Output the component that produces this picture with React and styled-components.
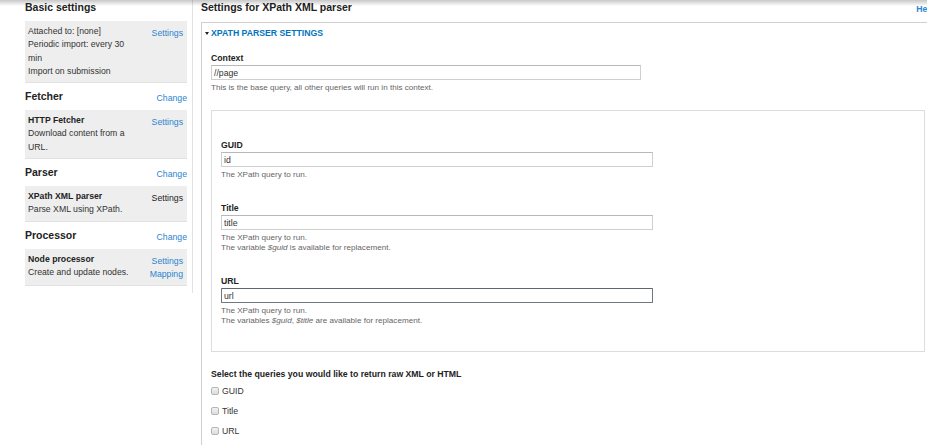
import React from 'react'
import styled, { createGlobalStyle } from 'styled-components'

const GlobalStyle = createGlobalStyle`
  html, body {
    margin: 0;
    padding: 0;
    overflow: hidden;
    background: #fff;
  }
  body {
    font-family: "Liberation Sans", Arial, sans-serif;
    color: #333;
    font-size: 8.7px;
  }
`

const Page = styled.div`
  display: flex;
  align-items: flex-start;
  padding-left: 25px;
  width: 960px;
  &::after {
    content: '';
    position: fixed;
    top: 0;
    left: 0;
    right: 0;
    height: 6px;
    background: linear-gradient(rgba(0, 0, 0, 0.22), rgba(0, 0, 0, 0));
    pointer-events: none;
  }
`

const Sidebar = styled.aside`
  width: 162px;
  padding-right: 5px;
  padding-bottom: 7px;
  border-right: 1px solid #e2e2e2;
`

const SectionHead = styled.div`
  display: flex;
  justify-content: space-between;
  align-items: flex-end;
  margin: ${(p) => (p.$first ? '0' : '6px')} 0 7px;
`

const Heading = styled.h3`
  margin: 0;
  font-size: 10.5px;
  line-height: 14px;
  font-weight: bold;
  color: #222;
`

const Link = styled.a`
  color: ${(p) => (p.$active ? '#222' : '#2b85cf')};
  text-decoration: none;
  font-size: 8.7px;
  line-height: ${(p) => (p.$tight ? '9px' : '13.3px')};
  cursor: pointer;
`

const Box = styled.div`
  display: flex;
  justify-content: space-between;
  background: #eeeeee;
  border-bottom: 1px solid #e2e2e2;
  padding: 4px 4px 4px 3px;
  line-height: 13.3px;
`

const BoxText = styled.div`
  width: 108px;
  color: #333;
  & strong {
    display: block;
    color: #222;
  }
`

const BoxLinks = styled.div`
  display: flex;
  flex-direction: column;
  align-items: flex-end;
  padding-top: 2px;
`

const Main = styled.main`
  width: 734px;
  margin-left: 8px;
`

const TitleRow = styled.div`
  display: flex;
  justify-content: space-between;
  align-items: flex-start;
  height: 22px;
`

const Title = styled.h2`
  margin: 0;
  font-size: 10.5px;
  line-height: 14px;
  font-weight: bold;
  color: #222;
`

const Help = styled.a`
  margin-top: 3px;
  color: #2b85cf;
  font-weight: bold;
  font-size: 8.7px;
  line-height: 12px;
`

const Fieldset = styled.section`
  border: 1px solid #d0d0d0;
  border-bottom: none;
  padding: 0 9px 60px;
`

const Legend = styled.div`
  display: flex;
  align-items: center;
  margin: 4px 0 13px -6px;
  color: #0074bd;
  font-weight: bold;
  text-transform: uppercase;
  font-size: 8.7px;
  line-height: 12px;
  &::before {
    content: '';
    width: 0;
    height: 0;
    margin-right: 2px;
    border-left: 2.5px solid transparent;
    border-right: 2.5px solid transparent;
    border-top: 3px solid #222;
  }
`

const FormItem = styled.div`
  & + & {
    margin-top: 22px;
  }
`

const Label = styled.label`
  display: block;
  font-weight: bold;
  color: #222;
  font-size: 8.7px;
  line-height: 12px;
  margin-bottom: 1px;
`

const TextInput = styled.input`
  display: block;
  box-sizing: border-box;
  width: ${(p) => p.$width}px;
  height: 15px;
  margin: 0;
  padding: 0 2px;
  font-family: "Liberation Sans", Arial, sans-serif;
  font-size: 8.7px;
  color: #333;
  background: #fff;
  outline: none;
  border: 1px solid ${(p) => (p.$focus ? '#70777d' : '#cfcfcf')};
  border-top-color: ${(p) => (p.$focus ? '#60666b' : '#b8b8b8')};
  border-radius: ${(p) => (p.$focus ? '1px' : '0')};
`

const Description = styled.div`
  margin-top: 3px;
  color: #666;
  font-size: 8.1px;
  line-height: 10px;
`

const InnerBox = styled.div`
  margin-top: 17px;
  border: 1px solid #dcdcdc;
  padding: 28px 9px 25px;
`

const CheckGroup = styled.div`
  margin-top: 16px;
`

const CheckRow = styled.label`
  display: flex;
  align-items: center;
  height: 20px;
  gap: 3px;
  color: #333;
  font-size: 8.7px;
`

const Check = styled.span`
  box-sizing: border-box;
  width: 8px;
  height: 8px;
  border: 1px solid #b5b5b5;
  border-radius: 2px;
  background: linear-gradient(#f2f2f2, #dcdcdc);
`

const sidebar = [
  {
    title: 'Basic settings',
    lines: ['Attached to: [none]', 'Periodic import: every 30 min', 'Import on submission'],
    links: ['Settings'],
  },
  {
    title: 'Fetcher',
    change: true,
    name: 'HTTP Fetcher',
    lines: ['Download content from a URL.'],
    links: ['Settings'],
  },
  {
    title: 'Parser',
    change: true,
    name: 'XPath XML parser',
    lines: ['Parse XML using XPath.'],
    links: ['Settings'],
    active: true,
  },
  {
    title: 'Processor',
    change: true,
    name: 'Node processor',
    lines: ['Create and update nodes.'],
    links: ['Settings', 'Mapping'],
  },
]

const queries = [
  { label: 'GUID', value: 'id', extra: null },
  {
    label: 'Title',
    value: 'title',
    extra: (
      <>
        The variable <em>$guid</em> is available for replacement.
      </>
    ),
  },
  {
    label: 'URL',
    value: 'url',
    focus: true,
    extra: (
      <>
        The variables <em>$guid</em>, <em>$title</em> are available for replacement.
      </>
    ),
  },
]

export default function App() {
  return (
    <>
      <GlobalStyle />
      <Page>
        <Sidebar>
          {sidebar.map((s, i) => (
            <div key={s.title}>
              <SectionHead $first={i === 0}>
                <Heading>{s.title}</Heading>
                {s.change && <Link $tight>Change</Link>}
              </SectionHead>
              <Box>
                <BoxText>
                  {s.name && <strong>{s.name}</strong>}
                  {s.lines.map((l) => (
                    <div key={l}>{l}</div>
                  ))}
                </BoxText>
                <BoxLinks>
                  {s.links.map((l) => (
                    <Link key={l} $active={s.active}>
                      {l}
                    </Link>
                  ))}
                </BoxLinks>
              </Box>
            </div>
          ))}
        </Sidebar>

        <Main>
          <TitleRow>
            <Title>Settings for XPath XML parser</Title>
            <Help>Help</Help>
          </TitleRow>
          <Fieldset>
            <Legend>XPath parser settings</Legend>
            <FormItem>
              <Label>Context</Label>
              <TextInput $width={430} defaultValue="//page" readOnly />
              <Description>This is the base query, all other queries will run in this context.</Description>
            </FormItem>

            <InnerBox>
              {queries.map((q) => (
                <FormItem key={q.label}>
                  <Label>{q.label}</Label>
                  <TextInput $width={432} $focus={q.focus} defaultValue={q.value} readOnly />
                  <Description>
                    The XPath query to run.
                    {q.extra && <div>{q.extra}</div>}
                  </Description>
                </FormItem>
              ))}
            </InnerBox>

            <CheckGroup>
              <Label>Select the queries you would like to return raw XML or HTML</Label>
              {queries.map((q) => (
                <CheckRow key={q.label}>
                  <Check />
                  {q.label}
                </CheckRow>
              ))}
            </CheckGroup>
          </Fieldset>
        </Main>
      </Page>
    </>
  )
}
